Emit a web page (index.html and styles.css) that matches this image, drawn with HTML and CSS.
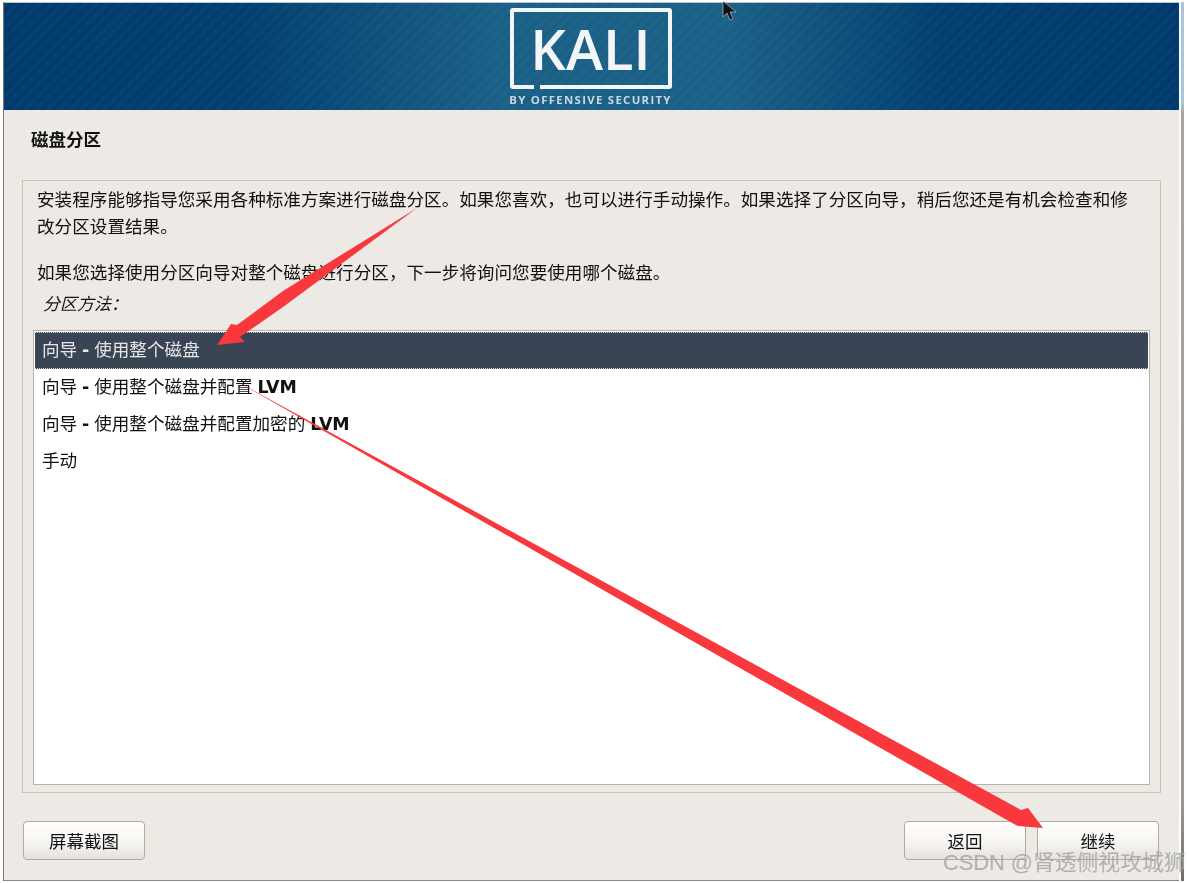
FILE: index.html
```html
<!DOCTYPE html>
<html lang="zh-CN">
<head>
    <meta charset="UTF-8">
    <meta name="viewport" content="width=device-width, initial-scale=1.0">
    <title>磁盘分区</title>
    <link rel="stylesheet" href="styles.css">
</head>
<body>
    <div class="window">
        <header class="banner">
            <div class="logo">
                <div class="logo-box">KALI</div>
                <div class="logo-sub">BY OFFENSIVE SECURITY</div>
            </div>
        </header>
        <main class="content">
            <h1>磁盘分区</h1>
            <section class="panel">
                <p class="intro">安装程序能够指导您采用各种标准方案进行磁盘分区。如果您喜欢，也可以进行手动操作。如果选择了分区向导，稍后您还是有机会检查和修改分区设置结果。</p>
                <p class="intro">如果您选择使用分区向导对整个磁盘进行分区，下一步将询问您要使用哪个磁盘。</p>
                <div class="list-label">分区方法：</div>
                <ul class="list">
                    <li class="selected">向导 <b>-</b> 使用整个磁盘</li>
                    <li>向导 <b>-</b> 使用整个磁盘并配置 <b>LVM</b></li>
                    <li>向导 <b>-</b> 使用整个磁盘并配置加密的 <b>LVM</b></li>
                    <li>手动</li>
                </ul>
            </section>
            <footer class="actions">
                <button type="button">屏幕截图</button>
                <div class="nav-buttons">
                    <button type="button">返回</button>
                    <button type="button">继续</button>
                </div>
            </footer>
        </main>
    </div>
    <div class="edge"></div>

    <svg class="overlay" width="1189" height="883" viewBox="0 0 1189 883">
        <polygon class="arrow" points="417,208 283,291 237,325 231,324 217,345 245,342 240,337 283,307"/>
        <polygon class="arrow" points="229,377 1021,810 1028,808 1043,828 1018,826 1014,824"/>
        <path class="cursor" d="M723 1 L723 17 L727 13 L730 20 L733 19 L730 12 L736 12 Z"/>
    </svg>
    <div class="watermark">CSDN @肾透侧视攻城狮</div>
</body>
</html>
```

FILE: styles.css
```css
html, body {
    margin: 0;
    padding: 0;
}
body {
    width: 1189px;
    height: 883px;
    overflow: hidden;
    background: #fff;
    font-family: "Liberation Sans", "Noto Sans CJK SC", sans-serif;
    color: #111;
    box-sizing: border-box;
    padding: 2px 0 0 3px;
    display: flex;
}
.window {
    width: 1176px;
    height: 879px;
    flex: none;
    box-sizing: border-box;
    border-left: 1px solid #77746f;
    border-bottom: 1px solid #8b8984;
    display: flex;
    flex-direction: column;
    background: #edeae5;
    filter: blur(0.5px);
}
.edge {
    width: 3px;
    height: 879px;
    margin-left: 2px;
    background: linear-gradient(180deg, #a9c6dc 0, #a9c6dc 100px, #a8a6a4 110px, #9c9a98 800px, #6f6d6b 100%);
}
.banner {
    height: 108px;
    flex: none;
    box-sizing: border-box;
    border-top: 1px solid #b5c4cf;
    display: flex;
    justify-content: center;
    background:
        repeating-linear-gradient(135deg, rgba(255,255,255,0.025) 0, rgba(255,255,255,0.025) 4px, transparent 4px, transparent 8px),
        linear-gradient(90deg, #003a6c 0%, #003e6f 20%, #1a5f85 42%, #1a5f85 62%, #003e6f 80%, #003a6c 100%);
}
.logo {
    display: flex;
    flex-direction: column;
    align-items: center;
    margin-top: 5px;
    margin-right: 2px;
}
.logo-box {
    position: relative;
    width: 162px;
    height: 81px;
    box-sizing: border-box;
    border: 4px solid #f2f6f8;
    border-radius: 3px;
    color: #f2f6f8;
    font-family: "Open Sans", sans-serif;
    font-size: 56px;
    font-weight: 600;
    line-height: 72px;
    text-align: center;
}
.logo-box::after {
    content: "";
    position: absolute;
    left: 20px;
    bottom: -4px;
    width: 6px;
    height: 4px;
    background: #1a5f85;
}
.logo-sub {
    margin-top: 3px;
    color: #c9d8e2;
    font-family: "Open Sans", sans-serif;
    font-size: 11.4px;
    font-weight: 700;
    letter-spacing: 1.3px;
    white-space: nowrap;
}
.content {
    flex: 1;
    display: flex;
    flex-direction: column;
    padding: 0 18px 0 18px;
    min-height: 0;
}
h1 {
    margin: 20px 0 0 9px;
    height: 50px;
    font-size: 17.5px;
    line-height: 20px;
    font-weight: 700;
}
.panel {
    height: 613px;
    box-sizing: border-box;
    border: 1px solid #c9c2b5;
    padding: 6px 10px 7px 10px;
    display: flex;
    flex-direction: column;
}
.intro {
    margin: 0 18px 19px 4px;
    font-size: 17.6px;
    line-height: 27px;
}
.list-label {
    margin: -12px 0 14px 10px;
    font-family: "Liberation Sans", "Noto Sans CJK TC", sans-serif;
    font-size: 17px;
    line-height: 22px;
    font-style: italic;
}
.list {
    flex: 1;
    list-style: none;
    margin: 0;
    padding: 1px;
    background: #fff;
    border: 1px solid #b9b3a6;
}
.list li {
    height: 37px;
    box-sizing: border-box;
    padding-left: 7px;
    font-size: 17.6px;
    line-height: 37px;
    white-space: nowrap;
}
.list li b {
    font-family: "DejaVu Sans", sans-serif;
    font-size: 17.4px;
}
.list li.selected {
    background: linear-gradient(180deg, #394357, #3a4552);
    color: #e6e6e6;
    border-top: 1px dotted #cfd2d8;
    border-bottom: 1px dotted #cfd2d8;
    line-height: 35px;
}
.actions {
    display: flex;
    justify-content: space-between;
    padding: 28px 2px 0 1px;
}
.nav-buttons {
    display: flex;
    gap: 11px;
}
button {
    width: 122px;
    height: 39px;
    padding: 0;
    border: 1px solid #b3aa9b;
    border-radius: 4px;
    background: linear-gradient(180deg, #ffffff, #f7f5f3 55%, #e6e2dd);
    color: #111;
    font-family: inherit;
    font-size: 17.5px;
}
.overlay {
    position: absolute;
    top: 0;
    left: 0;
}
.arrow {
    fill: #f8383c;
}
.cursor {
    fill: #111;
    stroke: #eee;
    stroke-width: 0.5;
}
.watermark {
    position: absolute;
    left: 943px;
    top: 850px;
    font-size: 21.8px;
    line-height: 26px;
    white-space: nowrap;
    color: rgba(165, 165, 165, 0.85);
}
```
